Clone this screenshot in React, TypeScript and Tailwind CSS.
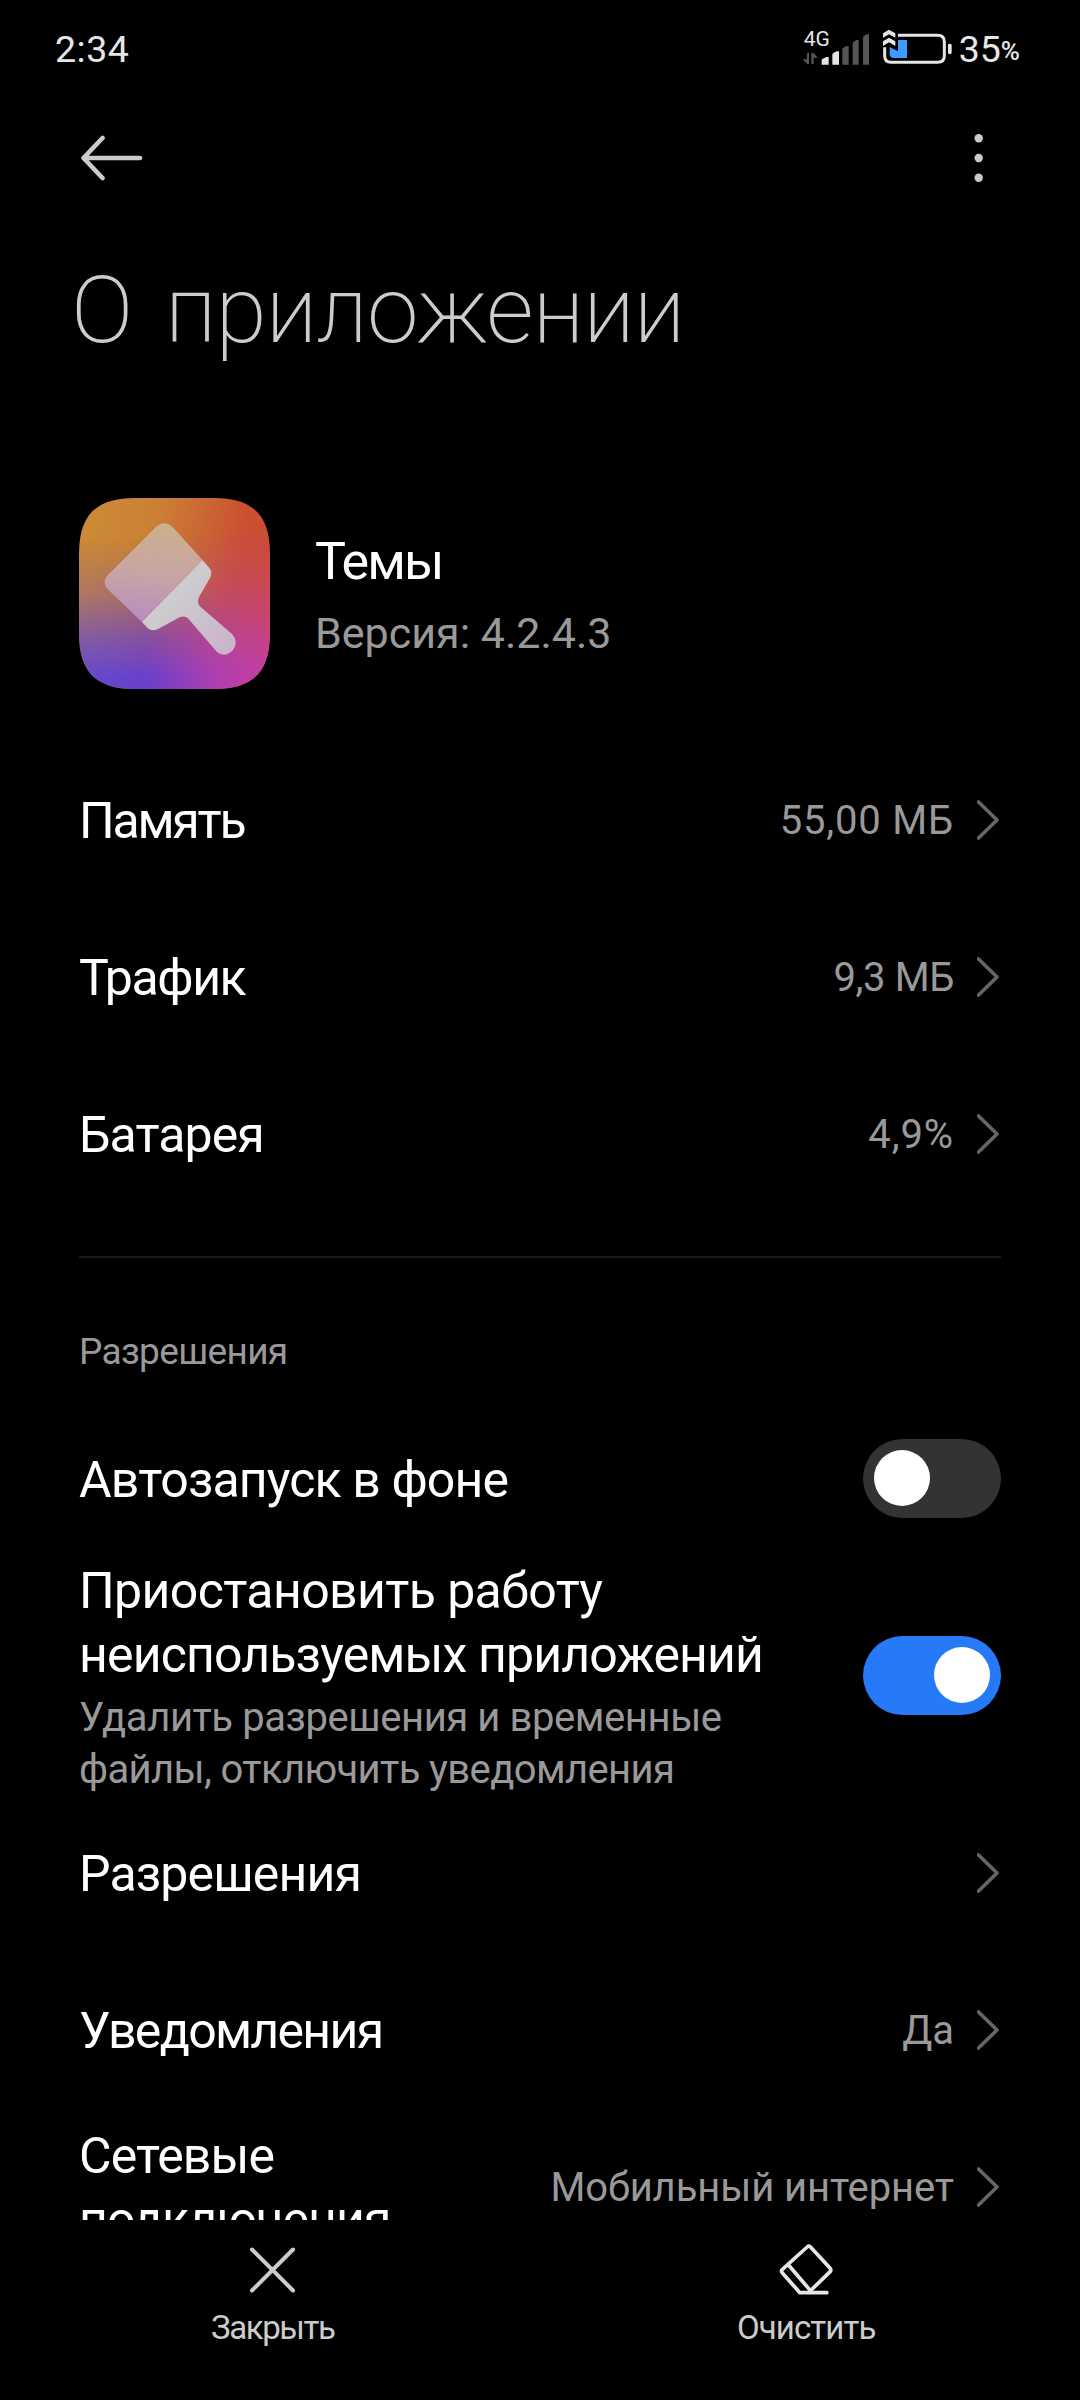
import { useState } from 'react'
import clsx from 'clsx'

type RowProps = {
  title: string
  value?: string
  titleClass?: string
  valueClass?: string
}

function Chevron() {
  return (
    <svg width="24" height="42" viewBox="0 0 24 42" className="mb-[2px] shrink-0" fill="none" stroke="#666666" strokeWidth="3.6" strokeLinecap="round" strokeLinejoin="round">
      <path d="M1.5 3L20 21L1.5 39" />
    </svg>
  )
}

function Row({ title, value, titleClass, valueClass }: RowProps) {
  return (
    <div className="flex h-[157px] shrink-0 items-center justify-between">
      <span className={clsx('text-[50px] leading-[64px] text-white', titleClass)}>{title}</span>
      <div className="flex shrink-0 items-center gap-[23px]">
        {value && <span className={clsx('text-[40px] leading-[52px] text-[#999999]', valueClass)}>{value}</span>}
        <Chevron />
      </div>
    </div>
  )
}

function Toggle({ checked, onChange }: { checked: boolean; onChange: (v: boolean) => void }) {
  return (
    <button
      role="switch"
      aria-checked={checked}
      onClick={() => onChange(!checked)}
      className={clsx(
        'flex h-[79px] w-[138px] shrink-0 rounded-full p-[11px] transition-colors',
        checked ? 'justify-end bg-[#277af7]' : 'justify-start bg-[#333333]'
      )}
    >
      <span className="h-14 w-14 rounded-full bg-white" />
    </button>
  )
}

function StatusBar() {
  return (
    <div className="flex h-[100px] shrink-0 items-start justify-between pl-[55px] pr-[60px] text-[#e6e6e6]">
      <span className="mt-[25px] text-[37.5px] leading-[48px] tracking-[0.5px]">2:34</span>
      <div className="flex items-start">
        <div className="relative mt-[30px] mr-3">
          {/* Signal bars with data arrows */}
          <svg width="68" height="35" viewBox="60 60 204 105">
            <path fill="#555555" d="M75 129h6v33h-5l-14-14h13zM88 162v-33h6l14 14h-13v19z" />
            <path fill="#e6e6e6" d="M119 164v-13q0-3 3-5l11-5h7v23zM151 164v-30q0-3 3-5l10-5h7v40z" />
            <path fill="#555555" d="M181 164v-46q0-3 3-5l9-5h7v56zM212 164v-64q0-3 3-5l8-5h7v74zM243 164v-81q0-3 3-5l8-5h7v91z" />
          </svg>
          <span className="absolute -top-[1px] left-[2px] text-[21px] leading-[20px]">4G</span>
        </div>
        {/* Battery */}
        <svg width="71" height="36" viewBox="300 57 213 108" className="mt-[29px]">
          <path fill="none" stroke="#e6e6e6" strokeWidth="9" d="M348 76h119q20 0 20 20v42q0 19-20 19H327q-19 0-19-19v-26" />
          <path fill="#e6e6e6" d="M498 105q0-4 5-4t6 4v23q0 4-6 4t-5-4z" />
          <path fill="#3d9bff" d="M348 90h27v54h-39q-13 0-13-13v-20l25 13z" />
          <path fill="#e6e6e6" d="M303 70l18-11l19 11v13l-19-10l-18 10zM303 94l18-11l19 11v14l-19-11l-18 11z" />
        </svg>
        <span className="mt-[25px] ml-[6px] text-[37.5px] leading-[48px]">35</span>
        <span className="mt-[35px] text-[26px] font-medium leading-[32px]">%</span>
      </div>
    </div>
  )
}

function AppIcon() {
  return (
    <svg width="191" height="191" viewBox="0 0 191 191" className="shrink-0">
      <defs>
        <linearGradient id="warm" x1="0.1" y1="0" x2="1" y2="0.15">
          <stop offset="0" stopColor="#cc8936" />
          <stop offset="0.35" stopColor="#cb8035" />
          <stop offset="0.85" stopColor="#cb5033" />
          <stop offset="1" stopColor="#cb4d33" />
        </linearGradient>
        <linearGradient id="cold" x1="0" y1="0" x2="1" y2="0">
          <stop offset="0" stopColor="#6149d0" />
          <stop offset="0.35" stopColor="#6a40ca" />
          <stop offset="0.7" stopColor="#ac3fb2" />
          <stop offset="1" stopColor="#c63f9d" />
        </linearGradient>
        <linearGradient id="fade" x1="0" y1="0" x2="0.06" y2="1">
          <stop offset="0.22" stopColor="#000" />
          <stop offset="0.5" stopColor="#484848" />
          <stop offset="0.75" stopColor="#b8b8b8" />
          <stop offset="0.95" stopColor="#fff" />
        </linearGradient>
        <linearGradient id="bristle" x1="0.5" y1="0" x2="0.45" y2="1">
          <stop offset="0" stopColor="#ccb08c" />
          <stop offset="0.5" stopColor="#c8a5a4" />
          <stop offset="1" stopColor="#b78dc0" />
        </linearGradient>
        <linearGradient id="handle" x1="0.3" y1="0.3" x2="1" y2="1">
          <stop offset="0" stopColor="#cecece" />
          <stop offset="1" stopColor="#c9b2c9" />
        </linearGradient>
        <mask id="bottom">
          <rect width="191" height="191" fill="url(#fade)" />
        </mask>
        <clipPath id="squircle">
          <path d="M56 0H135C174 0 191 17 191 56V135C191 174 174 191 135 191H56C17 191 0 174 0 135V56C0 17 17 0 56 0Z" />
        </clipPath>
      </defs>
      <g clipPath="url(#squircle)">
        <rect width="191" height="191" fill="url(#warm)" />
        <rect width="191" height="191" fill="url(#cold)" mask="url(#bottom)" />
      </g>
      <path fill="url(#bristle)" d="M63 124L29.5 92Q22.5 85 28 78L77 29Q86 21 94.5 30L123.5 62Z" />
      <path fill="url(#handle)" d="M123.5 62L130 69.5Q134 74 131 80L120 99Q117.5 104 121 108.5L153 136Q160 144 154 152Q146 160.5 138 154L110 121.5Q107 117 101 119L80 130.5Q74 134 69 130.5L63 124Z" />
    </svg>
  )
}

export default function App() {
  const [autostart, setAutostart] = useState(false)
  const [pauseUnused, setPauseUnused] = useState(true)

  return (
    <div className="flex h-[2400px] w-[1080px] flex-col overflow-hidden bg-black font-['Roboto','Noto_Sans',sans-serif]">
      <StatusBar />

      {/* Toolbar */}
      <div className="flex h-[115px] shrink-0 items-center justify-between px-[79px]">
        <svg width="65" height="46" viewBox="0 0 65 46" fill="none" stroke="#cccccc" strokeWidth="4.6" strokeLinecap="round" strokeLinejoin="round">
          <path d="M23.5 3L4.5 23L23.5 43M6 23H61" />
        </svg>
        <svg width="44" height="50" viewBox="0 0 44 50" fill="#cccccc">
          <circle cx="21.7" cy="5.3" r="4.2" />
          <circle cx="21.7" cy="25" r="4.2" />
          <circle cx="21.7" cy="44.7" r="4.2" />
        </svg>
      </div>

      <h1 className="mt-[36px] shrink-0 pl-[71px] text-[93px] font-extralight leading-[120px] tracking-[-0.9px] text-[#cccccc] [word-spacing:11px]">
        О приложении
      </h1>

      <div className="flex min-h-0 flex-1 flex-col overflow-hidden px-[79px]">
        {/* App info */}
        <div className="mt-[127px] flex shrink-0 items-center">
          <AppIcon />
          <div className="ml-[45px] flex flex-col pt-2">
            <span className="text-[52px] leading-[68px] tracking-[-1.9px] text-white">Темы</span>
            <span className="mt-[3px] text-[43px] leading-[68px] text-[#999999]">Версия: 4.2.4.3</span>
          </div>
        </div>

        <div className="mt-[53px] flex shrink-0 flex-col">
          <Row title="Память" titleClass="tracking-[-2.2px]" value="55,00 МБ" valueClass="tracking-[0.8px]" />
          <Row title="Трафик" titleClass="tracking-[-1.4px]" value="9,3 МБ" valueClass="tracking-[-0.4px]" />
          <Row title="Батарея" titleClass="tracking-[-0.9px]" value="4,9%" valueClass="tracking-[0.9px]" />
        </div>

        <div className="mt-[43px] h-[2px] shrink-0 bg-[#1a1a1a]" />

        {/* Permissions */}
        <h2 className="mt-[70px] shrink-0 text-[37px] leading-[48px] tracking-[-0.65px] text-[#999999]">Разрешения</h2>

        <div className="mt-[50px] flex h-[104px] shrink-0 items-center justify-between">
          <span className="pt-1 text-[50px] leading-[64px] tracking-[-0.88px] text-white">Автозапуск в фоне</span>
          <Toggle checked={autostart} onChange={setAutostart} />
        </div>

        <div className="mt-[29px] flex shrink-0 items-center justify-between">
          <div className="flex flex-col">
            <span className="text-[50px] leading-[64px] tracking-[-0.6px] text-white">Приостановить работу</span>
            <span className="text-[50px] leading-[64px] tracking-[-0.85px] text-white">неиспользуемых приложений</span>
            <span className="mt-[5px] text-[40px] leading-[52px] tracking-[-0.42px] text-[#999999]">Удалить разрешения и временные</span>
            <span className="-mb-[1px] text-[40px] leading-[52px] tracking-[-0.62px] text-[#999999]">файлы, отключить уведомления</span>
          </div>
          <div className="mb-1">
            <Toggle checked={pauseUnused} onChange={setPauseUnused} />
          </div>
        </div>

        <Row title="Разрешения" titleClass="tracking-[-0.85px]" />
        <Row title="Уведомления" titleClass="tracking-[-1.7px]" value="Да" />
        <Row title="Сетевые подключения" titleClass="w-[340px] tracking-[-0.9px]" value="Мобильный интернет" valueClass="tracking-[-0.1px]" />
      </div>

      {/* Bottom actions */}
      <div className="flex h-[180px] shrink-0 pl-1.5 pr-[7px] text-[33px] leading-[44px] text-[#cccccc]">
        <button className="flex flex-1 flex-col items-center pt-[22px]">
          <svg width="57" height="55" viewBox="0 0 57 55" stroke="#cccccc" strokeWidth="4" strokeLinecap="round">
            <path d="M8 7.5L49 48.5M49 7.5L8 48.5" />
          </svg>
          <span className="mt-[9px] tracking-[-1.4px]">Закрыть</span>
        </button>
        <button className="flex flex-1 flex-col items-center pt-[22px]">
          <svg width="57" height="55" viewBox="770 785 170 165" fill="none" stroke="#e6e6e6" strokeWidth="11" strokeLinecap="round" strokeLinejoin="round">
            <path d="M835 937L782 877Q778 872 782 868L857 800Q862 795 867 800L926 864Q930 869 926 874L866 932M801 854L866 930M835 937H916" />
          </svg>
          <span className="mt-[9px] tracking-[-0.9px]">Очистить</span>
        </button>
      </div>
    </div>
  )
}
